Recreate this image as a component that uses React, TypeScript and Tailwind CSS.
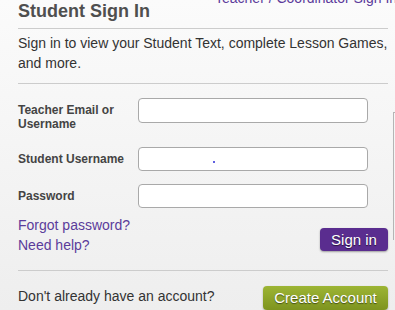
import React from 'react';

const font = { fontFamily: '"Liberation Sans", Arial, sans-serif' };

function Field({ label, twoLine, dot }: { label: React.ReactNode; twoLine?: boolean; dot?: boolean }) {
  return (
    <div className={twoLine ? 'flex items-start' : 'flex items-center'}>
      <label
        className={`w-[120px] shrink-0 text-[12px] font-bold leading-[14px] text-[#444] ${twoLine ? 'mt-[5px]' : ''}`}
      >
        {label}
      </label>
      <div className="relative">
        <input
          type="text"
          className={`block w-[230px] ${twoLine ? 'h-[25px]' : 'h-[24px]'} rounded-[4px] border border-[#a9a9a9] bg-white px-2 text-[13px] outline-none`}
        />
        {dot && <span className="absolute left-[75px] top-[14px] h-[2px] w-[2px] rounded-full bg-[#2b2bd6]" />}
      </div>
    </div>
  );
}

export default function App() {
  return (
    <div
      className="flex h-[310px] w-[395px] overflow-hidden bg-gradient-to-b from-[#fbfbfb] to-[#eeeeee]"
      style={font}
    >
      <div className="relative ml-[18px] w-[370px] shrink-0">
        <a className="absolute left-[197px] top-[-10px] whitespace-nowrap text-[14px] leading-[16px] text-[#5b3c9b]">
          Teacher / Coordinator Sign In
        </a>

        <h1 className="text-[18px] font-bold leading-[22px] text-[#4f4f4f]">Student Sign In</h1>
        <div className="mt-[6px] h-px bg-[#cccccc]" />

        <p className="mt-[4px] text-[14px] leading-[20px] text-[#333]">
          Sign in to view your Student Text, complete Lesson Games, and more.
        </p>
        <div className="mt-[10px] h-px bg-[#cccccc]" />

        <div className="mt-[14px]">
          <Field label={<>Teacher Email or<br />Username</>} twoLine />
        </div>
        <div className="mt-[16px]">
          <Field label="Student Username" dot />
        </div>
        <div className="mt-[13px]">
          <Field label="Password" />
        </div>

        <div className="mt-[7px] flex items-start justify-between">
          <div className="flex flex-col text-[14px] leading-[20px] text-[#5b3c9b]">
            <a>Forgot password?</a>
            <a>Need help?</a>
          </div>
          <button className="mt-[13px] h-[23px] w-[68px] rounded-[4px] bg-[#5a2d8f] text-[15px] leading-[23px] text-white shadow-[0_1px_2px_rgba(0,0,0,0.35)] [text-shadow:0_1px_1px_rgba(0,0,0,0.6)]">
            Sign in
          </button>
        </div>

        <div className="mt-[15px] h-px bg-[#cccccc]" />

        <div className="mt-[15px] flex items-start justify-between">
          <span className="text-[14px] leading-[20px] text-[#333]">Don't already have an account?</span>
          <button className="h-[24px] w-[125px] rounded-[4px] bg-gradient-to-b from-[#9db534] to-[#7e941f] text-[15px] leading-[24px] text-white shadow-[0_1px_2px_rgba(0,0,0,0.3)] [text-shadow:0_1px_1px_rgba(0,0,0,0.5)]">
            Create Account
          </button>
        </div>
      </div>

      <div className="ml-[5px] mt-[112px] h-[128px] w-[40px] shrink-0 border-l border-t border-[#b5b5b5]" />
    </div>
  );
}
